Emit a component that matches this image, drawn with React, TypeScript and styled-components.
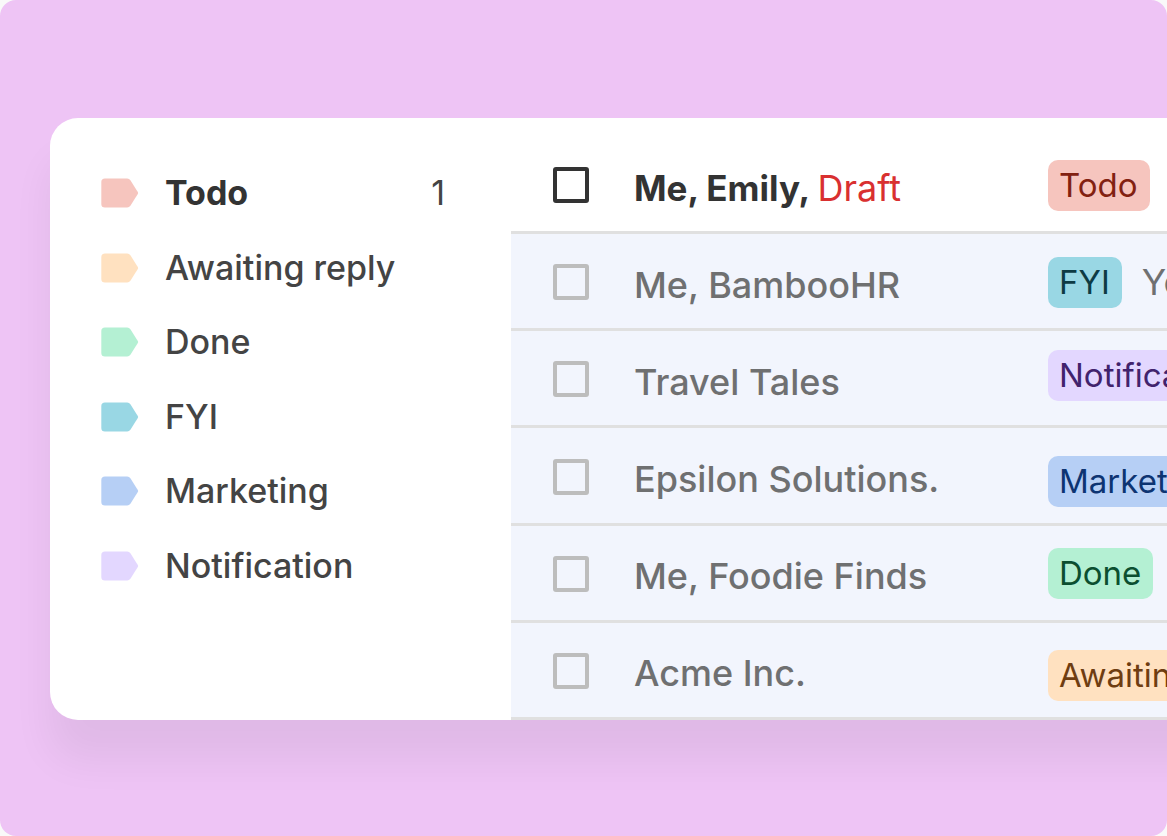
import React from 'react';
import styled, { createGlobalStyle } from 'styled-components';

const GlobalStyle = createGlobalStyle`
  *, *::before, *::after { box-sizing: border-box; }
  html, body, #root { height: 100%; }
  body { margin: 0; background: #f9f9f9; }
`;

type Tone = { bg: string; fg: string };

const tones: Record<string, Tone> = {
  todo: { bg: '#f6c5be', fg: '#822111' },
  awaiting: { bg: '#ffe1c0', fg: '#6f3d11' },
  done: { bg: '#b4f0d3', fg: '#0b4f30' },
  fyi: { bg: '#99d7e4', fg: '#0d3b44' },
  marketing: { bg: '#b6cff5', fg: '#0d3472' },
  notification: { bg: '#e3d7ff', fg: '#41236d' },
};

const Page = styled.div`
  min-height: 100%;
  padding: 118px 0 116px 50px;
  overflow: hidden;
  border-radius: 16px;
  background: #eec4f5;
  font-family: Inter, 'Liberation Sans', sans-serif;
`;

const Card = styled.main`
  display: grid;
  grid-template-columns: 461px minmax(0, 1fr);
  min-height: 602px;
  margin-right: -64px;
  border-radius: 28px;
  background: #ffffff;
  box-shadow: 0 40px 40px rgba(0, 0, 0, 0.06);
`;

const Sidebar = styled.nav`
  padding: 38px 66px 0 51px;
`;

const LabelList = styled.ul`
  display: grid;
  grid-auto-rows: 1fr;
  min-height: 447px;
  margin: 0;
  padding: 0;
  list-style: none;
`;

const LabelItem = styled.li`
  display: grid;
`;

const LabelLink = styled.a<{ $active?: boolean }>`
  display: flex;
  align-items: center;
  gap: 26px;
  color: ${(p) => (p.$active ? '#333333' : '#444444')};
  font-size: 34px;
  font-weight: ${(p) => (p.$active ? 700 : 500)};
  line-height: 44px;
  text-decoration: none;
  white-space: nowrap;
`;

const Count = styled.span`
  margin-left: auto;
  color: #444444;
  font-weight: 400;
`;

const Inbox = styled.ul`
  display: grid;
  grid-auto-rows: 1fr;
  margin: 0;
  padding: 19px 0 0;
  list-style: none;
  overflow: hidden;
`;

const MailRow = styled.li<{ $unread?: boolean }>`
  display: grid;
  grid-template-columns: 36px 459px max-content;
  align-items: center;
  padding: 2px 0 0 42px;
  border-bottom: 3px solid #e0e0e0;
  background: ${(p) => (p.$unread ? '#ffffff' : '#f2f5fd')};
  color: ${(p) => (p.$unread ? '#333333' : '#6f7071')};
  font-size: ${(p) => (p.$unread ? '35px' : '36px')};
  font-weight: ${(p) => (p.$unread ? 700 : 500)};
  line-height: 46px;
  white-space: nowrap;
`;

const Checkbox = styled.input<{ $unread?: boolean }>`
  appearance: none;
  width: 36px;
  height: 36px;
  margin: 0;
  border: 4px solid ${(p) => (p.$unread ? '#333333' : '#bdbdbd')};
  border-radius: 3px;

  &:checked {
    background: #bdbdbd;
  }
`;

const Sender = styled.label`
  padding: 5px 0 0 45px;
`;

const Draft = styled.span`
  color: #d93030;
  font-size: 36px;
  font-weight: 400;
`;

type Align = 'start' | 'center' | 'end';

const Summary = styled.div<{ $align: Align }>`
  display: flex;
  align-items: ${(p) => (p.$align === 'center' ? 'center' : `flex-${p.$align}`)};
  align-self: stretch;
  gap: 20px;
  padding: ${(p) => (p.$align === 'center' ? '0' : '17px 0 16px')};
`;

const Tag = styled.span<{ $tone: Tone }>`
  padding: 0 12px 0 11px;
  border-radius: 10px;
  background: ${(p) => p.$tone.bg};
  color: ${(p) => p.$tone.fg};
  font-size: 33px;
  font-weight: 400;
  line-height: 51px;
`;

const Subject = styled.span`
  font-weight: 400;
`;

const TagIcon = ({ color }: { color: string }) => (
  <svg width="38" height="30" viewBox="0 0 38 30" fill={color} aria-hidden="true">
    <path d="M4 .5H26.200Q28.200 .5 29.400 2.200L36.800 14Q37.400 15 36.800 16L29.400 27.800Q28.200 29.500 26.200 29.500H4Q.3 29.500 .3 26V4Q.3 .5 4 .5Z" />
  </svg>
);

const labels = [
  { name: 'Todo', tone: tones.todo, count: 1 },
  { name: 'Awaiting reply', tone: tones.awaiting },
  { name: 'Done', tone: tones.done },
  { name: 'FYI', tone: tones.fyi },
  { name: 'Marketing', tone: tones.marketing },
  { name: 'Notification', tone: tones.notification },
];

type Mail = {
  sender: string;
  tag: string;
  tone: Tone;
  align?: Align;
  draft?: boolean;
  unread?: boolean;
  subject?: string;
};

const mails: Mail[] = [
  { sender: 'Me, Emily,', draft: true, unread: true, tag: 'Todo', tone: tones.todo },
  { sender: 'Me, BambooHR', tag: 'FYI', tone: tones.fyi, subject: 'Your' },
  { sender: 'Travel Tales', tag: 'Notification', tone: tones.notification, align: 'start' },
  { sender: 'Epsilon Solutions.', tag: 'Marketing', tone: tones.marketing, align: 'end' },
  { sender: 'Me, Foodie Finds', tag: 'Done', tone: tones.done },
  { sender: 'Acme Inc.', tag: 'Awaiting reply', tone: tones.awaiting, align: 'end' },
];

export default function App() {
  return (
    <>
      <GlobalStyle />
      <Page>
        <Card>
          <Sidebar>
            <LabelList>
              {labels.map((label) => (
                <LabelItem key={label.name}>
                  <LabelLink href="#" $active={label.count !== undefined}>
                    <TagIcon color={label.tone.bg} />
                    {label.name}
                    {label.count !== undefined && <Count>{label.count}</Count>}
                  </LabelLink>
                </LabelItem>
              ))}
            </LabelList>
          </Sidebar>
          <Inbox>
            {mails.map((mail, i) => (
              <MailRow key={mail.sender} $unread={mail.unread}>
                <Checkbox type="checkbox" id={`mail-${i}`} $unread={mail.unread} />
                <Sender htmlFor={`mail-${i}`}>
                  {mail.sender}{' '}
                  {mail.draft && <Draft>Draft</Draft>}
                </Sender>
                <Summary $align={mail.align ?? 'center'}>
                  <Tag $tone={mail.tone}>{mail.tag}</Tag>
                  {mail.subject && <Subject>{mail.subject}</Subject>}
                </Summary>
              </MailRow>
            ))}
          </Inbox>
        </Card>
      </Page>
    </>
  );
}
